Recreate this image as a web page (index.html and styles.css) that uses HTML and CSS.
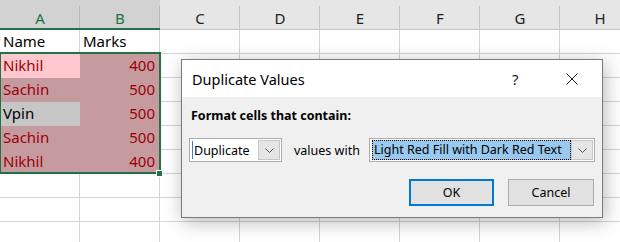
FILE: index.html
```html
<!DOCTYPE html>
<html>
<head>
<meta charset="utf-8">
<link rel="stylesheet" href="styles.css">
</head>
<body>
<div class="screen">
  <div class="sheet">
    <div class="ch sel">A</div><div class="ch sel">B</div><div class="ch">C</div><div class="ch">D</div><div class="ch">E</div><div class="ch">F</div><div class="ch">G</div><div class="ch">H</div>

    <div class="c">Name</div><div class="c">Marks</div><div class="c"></div><div class="c"></div><div class="c"></div><div class="c"></div><div class="c"></div><div class="c"></div>

    <div class="c dup">Nikhil</div><div class="c dup-sel num">400</div><div class="c"></div><div class="c"></div><div class="c"></div><div class="c"></div><div class="c"></div><div class="c"></div>

    <div class="c dup-sel">Sachin</div><div class="c dup-sel num">500</div><div class="c"></div><div class="c"></div><div class="c"></div><div class="c"></div><div class="c"></div><div class="c"></div>

    <div class="c plain-sel">Vpin</div><div class="c dup-sel num">500</div><div class="c"></div><div class="c"></div><div class="c"></div><div class="c"></div><div class="c"></div><div class="c"></div>

    <div class="c dup-sel">Sachin</div><div class="c dup-sel num">500</div><div class="c"></div><div class="c"></div><div class="c"></div><div class="c"></div><div class="c"></div><div class="c"></div>

    <div class="c dup-sel">Nikhil</div><div class="c dup-sel num">400</div><div class="c"></div><div class="c"></div><div class="c"></div><div class="c"></div><div class="c"></div><div class="c"></div>

    <div class="c"></div><div class="c"></div><div class="c"></div><div class="c"></div><div class="c"></div><div class="c"></div><div class="c"></div><div class="c"></div>
    <div class="c"></div><div class="c"></div><div class="c"></div><div class="c"></div><div class="c"></div><div class="c"></div><div class="c"></div><div class="c"></div>
    <div class="c"></div><div class="c"></div><div class="c"></div><div class="c"></div><div class="c"></div><div class="c"></div><div class="c"></div><div class="c"></div>
  </div>

  <div class="selection"></div>
  <div class="handle"></div>

  <div class="dialog">
    <div class="titlebar">
      <span class="title">Duplicate Values</span>
      <span class="help">?</span>
      <svg class="close" width="12" height="12" viewBox="0 0 12 12"><path d="M0.5 0.5 L11.5 11.5 M11.5 0.5 L0.5 11.5" stroke="#1a1a1a" stroke-width="1" fill="none"/></svg>
    </div>
    <div class="body">
      <div class="label">Format cells that contain:</div>
      <div class="row">
        <div class="combo combo-type">
          <span class="field"><span class="caret"></span>Duplicate</span>
          <span class="drop"><svg width="9" height="5" viewBox="0 0 9 5"><path d="M0.5 0.5 L4.5 4.5 L8.5 0.5" stroke="#555" stroke-width="1" fill="none"/></svg></span>
        </div>
        <span class="with">values with</span>
        <div class="combo combo-fmt">
          <span class="field"><span class="hl">Light Red Fill with Dark Red Text</span></span>
          <span class="drop"><svg width="9" height="5" viewBox="0 0 9 5"><path d="M0.5 0.5 L4.5 4.5 L8.5 0.5" stroke="#555" stroke-width="1" fill="none"/></svg></span>
        </div>
      </div>
      <div class="buttons">
        <div class="btn btn-ok">OK</div>
        <div class="btn">Cancel</div>
      </div>
    </div>
  </div>
</div>
</body>
</html>
```

FILE: styles.css
```css
html, body {
  margin: 0;
  padding: 0;
  background: #ffffff;
}

.screen {
  position: relative;
  width: 620px;
  height: 242px;
  overflow: hidden;
  background: #ffffff;
}

.sheet {
  display: grid;
  grid-template-columns: repeat(8, 80px);
  grid-template-rows: 30px repeat(9, 24px);
  font-family: "Noto Sans", "Open Sans", sans-serif;
  font-size: 15px;
  color: #000;
}

.ch {
  box-sizing: border-box;
  background-color: #e6e6e6;
  background-image: linear-gradient(#c4c4c4, #c4c4c4);
  background-repeat: no-repeat;
  background-position: right 6px;
  background-size: 1px 100%;
  border-bottom: 1px solid #c4c4c4;
  text-align: center;
  line-height: 20px;
  padding-top: 8px;
  color: #222;
}

.ch.sel {
  background-color: #d2d2d2;
  color: #217346;
  border-bottom: 2px solid #217346;
  background-image: linear-gradient(#b8b8b8, #b8b8b8);
}

.c {
  box-sizing: border-box;
  border-right: 1px solid #d4d4d4;
  border-bottom: 1px solid #d4d4d4;
  line-height: 23px;
  padding: 0 3px;
  white-space: nowrap;
  overflow: hidden;
}

.num {
  text-align: right;
  padding-right: 4px;
}

.dup {
  background: #ffc7ce;
  color: #9c0006;
  border-color: transparent;
}

.dup-sel {
  background: #c69ba0;
  color: #9c0006;
  border-color: transparent;
}

.plain-sel {
  background: #c6c6c6;
  border-color: transparent;
}

.selection {
  position: absolute;
  left: -1px;
  top: 52px;
  width: 158px;
  height: 118px;
  border: 2px solid #217346;
}

.handle {
  position: absolute;
  left: 156px;
  top: 170px;
  width: 5px;
  height: 5px;
  background: #217346;
  border: 1px solid #ffffff;
}

.dialog {
  position: absolute;
  left: 181px;
  top: 59px;
  width: 420px;
  height: 157px;
  border: 1px solid #7a7a7a;
  background: #f0f0f0;
  box-shadow: 2px 4px 18px rgba(0, 0, 0, 0.28);
  font-family: "Noto Sans", "Open Sans", sans-serif;
  color: #000;
  display: flex;
  flex-direction: column;
}

.titlebar {
  height: 37px;
  background: #ffffff;
  display: flex;
  align-items: center;
  padding-left: 10px;
  padding-right: 24px;
}

.title {
  font-size: 14.5px;
  flex: 1;
}

.help {
  font-size: 15px;
  width: 6px;
  margin-right: 48px;
  line-height: 12px;
  color: #1a1a1a;
}

.close {
  display: block;
}

.body {
  flex: 1;
  display: flex;
  flex-direction: column;
  font-size: 12.5px;
}

.label {
  font-weight: bold;
  margin-top: 11px;
  padding-left: 9px;
  line-height: 16px;
}

.row {
  display: flex;
  align-items: center;
  margin-top: 14px;
  padding-left: 7px;
  height: 24px;
}

.combo {
  box-sizing: border-box;
  height: 24px;
  border: 1px solid #adadad;
  background: #ffffff;
  display: flex;
  padding: 1px;
}

.combo-type {
  width: 93px;
}

.combo-fmt {
  width: 226px;
}

.field {
  flex: 1;
  display: flex;
  align-items: center;
  white-space: nowrap;
}

.caret {
  display: inline-block;
  width: 1px;
  height: 18px;
  background: #3c7fd6;
  margin-left: 1px;
  margin-right: 1px;
}

.hl {
  box-sizing: border-box;
  display: block;
  width: 199px;
  height: 20px;
  margin-left: 1px;
  line-height: 18px;
  padding-left: 1px;
  background: #99c9ef;
  border: 1px dotted #000;
}

.drop {
  box-sizing: border-box;
  width: 22px;
  border: 1px solid #c6c6c6;
  background: #e5e5e5;
  display: flex;
  align-items: center;
  justify-content: center;
}

.drop svg {
  display: block;
}

.with {
  box-sizing: border-box;
  width: 87px;
  padding-left: 12px;
  white-space: nowrap;
}

.buttons {
  display: flex;
  justify-content: flex-end;
  gap: 14px;
  margin-top: 17px;
  padding-right: 8px;
}

.btn {
  box-sizing: border-box;
  width: 86px;
  height: 27px;
  border: 1px solid #adadad;
  background: #e1e1e1;
  display: flex;
  align-items: center;
  justify-content: center;
}

.btn-ok {
  width: 85px;
  border: 2px solid #0078d7;
}
```
